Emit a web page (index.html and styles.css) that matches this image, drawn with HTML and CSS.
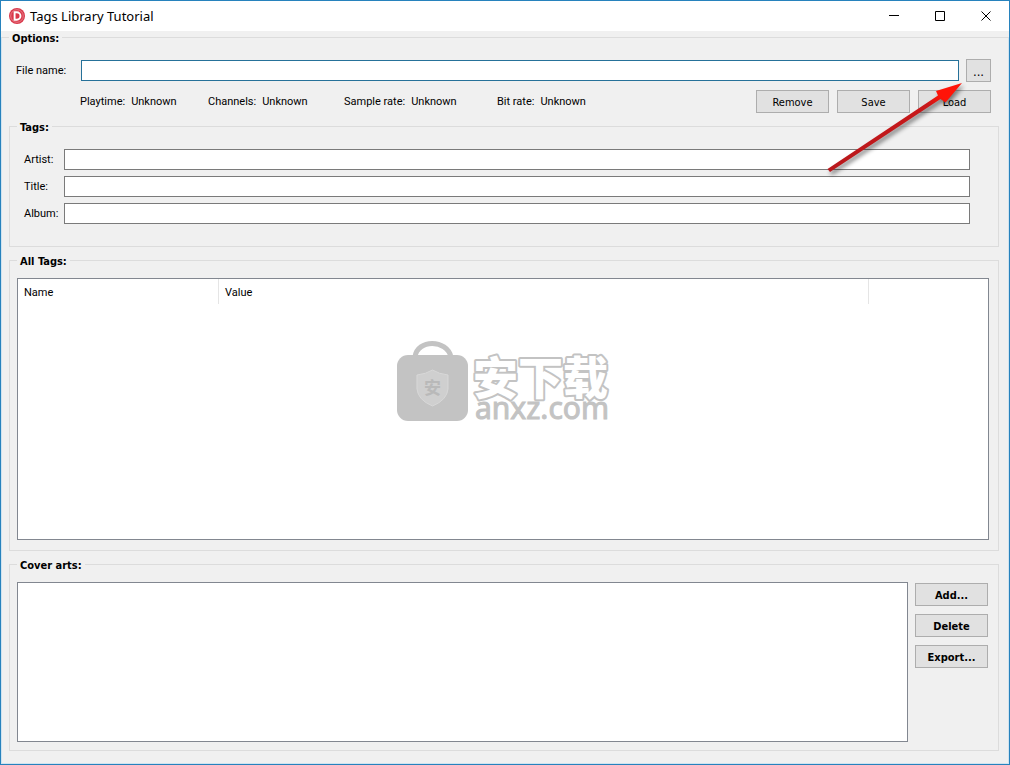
FILE: index.html
```html
<!DOCTYPE html>
<html lang="en">
<head>
<meta charset="utf-8">
<title>Tags Library Tutorial</title>
<link rel="stylesheet" href="styles.css">
</head>
<body>
<div class="window">
  <header class="titlebar">
    <svg class="app-icon" viewBox="0 0 16 16" aria-hidden="true">
      <circle cx="8" cy="8" r="8" fill="#d9384a"/>
      <circle cx="8" cy="8" r="6.300" fill="none" stroke="#ea8c96" stroke-width=".8"/>
      <path d="M5.600 4.300h2.200a3.700 3.700 0 0 1 0 7.400H5.600z" fill="none" stroke="#fff" stroke-width="1.900"/>
    </svg>
    <h1 class="title">Tags Library Tutorial</h1>
    <div class="window-controls">
      <button class="control" type="button" aria-label="Minimize"><svg viewBox="0 0 11 11"><path d="M0 4.500h10"/></svg></button>
      <button class="control" type="button" aria-label="Maximize"><svg viewBox="0 0 11 11"><path d="M.5 .5h9v9h-9z"/></svg></button>
      <button class="control" type="button" aria-label="Close"><svg viewBox="0 0 11 11"><path d="M.5 .5l9 9M9.500 .5l-9 9"/></svg></button>
    </div>
  </header>

  <fieldset class="group options">
    <legend>Options:</legend>
    <div class="file-row">
      <label for="file">File name:</label>
      <input class="field focused" id="file" type="text">
      <button class="button browse" type="button">...</button>
    </div>
    <div class="info-row">
      <dl class="info">
        <div><dt>Playtime:</dt><dd>Unknown</dd></div>
        <div><dt>Channels:</dt><dd>Unknown</dd></div>
        <div><dt>Sample rate:</dt><dd>Unknown</dd></div>
        <div><dt>Bit rate:</dt><dd>Unknown</dd></div>
      </dl>
      <div class="actions">
        <button class="button" type="button">Remove</button>
        <button class="button" type="button">Save</button>
        <button class="button" type="button">Load</button>
      </div>
    </div>

    <fieldset class="group tags">
      <legend>Tags:</legend>
      <label for="artist">Artist:</label><input class="field" id="artist" type="text">
      <label for="song">Title:</label><input class="field" id="song" type="text">
      <label for="album">Album:</label><input class="field" id="album" type="text">
    </fieldset>

    <fieldset class="group all-tags">
      <legend>All Tags:</legend>
      <div class="list tag-list">
        <table class="table">
          <thead><tr><th class="col-name" scope="col">Name</th><th class="col-value" scope="col">Value</th><td></td></tr></thead>
        </table>
        <svg class="watermark" viewBox="0 0 216 92" role="img" aria-label="anxz.com">
          <path d="M18 16C20 -2 50 -2 54 16" fill="none" stroke="#c3c3c3" stroke-width="5"/>
          <rect x="0" y="14" width="71" height="66" rx="11" fill="#c3c3c3"/>
          <path d="M20 34Q29 33 35.500 29Q42 33 51 34V48Q50 59 35.500 65Q21 59 20 48Z" fill="#cfcfcf" stroke="#d8d8d8"/>
          <text class="shield-text" x="27" y="53">安</text>
          <text class="brand" x="76" y="54">安下载</text>
          <text class="domain" x="78" y="78">anxz.com</text>
        </svg>
      </div>
    </fieldset>

    <fieldset class="group covers">
      <legend>Cover arts:</legend>
      <div class="cover-row">
        <div class="list"></div>
        <div class="cover-actions">
          <button class="button strong" type="button">Add...</button>
          <button class="button strong" type="button">Delete</button>
          <button class="button strong" type="button">Export...</button>
        </div>
      </div>
    </fieldset>
  </fieldset>

  <svg class="arrow" viewBox="0 0 144 98" aria-hidden="true">
    <defs>
      <linearGradient id="red" x1="0" y1="1" x2="1" y2="0">
        <stop offset="0" stop-color="#b8181c"/><stop offset=".75" stop-color="#c8181a"/><stop offset=".85" stop-color="#ff1408"/>
      </linearGradient>
    </defs>
    <path d="M.5 88L111 14.500L109 10L135 2L118.500 21.500L113.500 18L3 91Z" fill="url(#red)"/>
  </svg>
</div>
</body>
</html>
```
FILE: styles.css
```css
* { box-sizing: border-box; }
body {
  margin: 0;
  background: #f0f0f0;
  color: #000;
  font: 11px/14px Roboto, "Noto Sans", sans-serif;
}
.window {
  position: relative;
  display: flex;
  flex-direction: column;
  min-height: 100vh;
  border: 1px solid #2782bd;
}
.titlebar {
  display: flex;
  align-items: center;
  height: 30px;
  padding-left: 8px;
  background: #fff;
}
.app-icon { width: 16px; height: 16px; margin-right: 5px; }
.title { margin: 0; font: 400 13px/16px "Noto Sans", sans-serif; }
.window-controls { display: flex; margin-left: auto; }
.control {
  display: grid;
  place-items: center;
  width: 46px;
  height: 28px;
  padding: 0;
  border: 0;
  background: none;
}
.control svg { width: 11px; height: 11px; fill: none; stroke: #000; }
.group {
  min-width: 0;
  margin: 0;
  border: 1px solid #dcdcdc;
}
.group legend {
  padding: 2px 3px 0;
  font-family: "DejaVu Sans Condensed", "DejaVu Sans", sans-serif;
  font-stretch: condensed;
  font-weight: 700;
  line-height: 11px;
}
.options {
  flex: 1;
  padding: 0 9px 11px 7px;
  border-color: #cfe3f0;
  border-top-color: #dcdcdc;
}
.field {
  width: 100%;
  min-width: 0;
  height: 21px;
  padding: 0 4px;
  border: 1px solid #7a7a7a;
  background: #fff;
  font: inherit;
}
.focused { border-color: #267199; }
.field:focus { outline: 0; border-color: #0078d7; }
.button {
  width: 73px;
  height: 23px;
  padding: 2px 0 0;
  border: 1px solid #adadad;
  background: #e1e1e1;
  color: #000;
  font: 11px/14px "DejaVu Sans Condensed", "DejaVu Sans", sans-serif;
  font-stretch: condensed;
}
.strong { font-weight: 700; }
.browse { width: 25px; font-size: 13px; }
.file-row {
  display: grid;
  grid-template-columns: 58px 1fr 25px;
  align-items: center;
  column-gap: 7px;
  margin: 15px 8px 0 7px;
}
.info-row {
  display: flex;
  justify-content: space-between;
  margin: 8px 8px 7px 71px;
}
.info {
  display: grid;
  grid-template-columns: 128px 136px 153px auto;
  align-items: center;
  margin: 0;
}
.info div { display: flex; gap: 6px; white-space: nowrap; }
.info dd { margin: 0; }
.actions { display: flex; gap: 8px; }
.tags {
  display: grid;
  grid-template-columns: 40px 1fr;
  align-items: center;
  row-gap: 6px;
  padding: 16px 28px 22px 14px;
  margin-bottom: 7px;
}
.tags legend { margin-left: -7px; }
.all-tags {
  padding: 11px 9px 10px 7px;
  margin-bottom: 7px;
}
.list {
  position: relative;
  flex: 1;
  min-height: 160px;
  border: 1px solid #828790;
  background: #fff;
}
.tag-list { min-height: 262px; }
.table {
  width: 100%;
  border-spacing: 0;
  table-layout: fixed;
}
.table th, .table td {
  height: 25px;
  padding: 2px 6px 0;
  text-align: left;
  font-weight: 400;
}
.table th { border-right: 1px solid #e5e5e5; }
.col-name { width: 201px; }
.col-value { width: 650px; }
.covers { padding: 11px 10px 8px 7px; }
.cover-row { display: flex; gap: 7px; }
.cover-actions {
  display: flex;
  flex-direction: column;
  gap: 8px;
  padding-top: 1px;
}
.watermark {
  position: absolute;
  top: 62px;
  left: 50%;
  width: 216px;
  height: 92px;
  margin-left: -106px;
}
.brand {
  fill: #fff;
  stroke: #c3c3c3;
  stroke-width: 4px;
  stroke-linejoin: round;
  paint-order: stroke;
  font: 900 45px "Noto Sans CJK SC", sans-serif;
}
.domain { fill: #c3c3c3; stroke: #c3c3c3; font: 400 30px "Noto Sans", sans-serif; }
.shield-text { fill: #b9b9b9; font: 700 17px "Noto Sans CJK SC", sans-serif; }
.arrow {
  position: absolute;
  top: 80px;
  right: 38px;
  width: 144px;
  height: 98px;
  pointer-events: none;
  filter: drop-shadow(2px 3px 2px #0007);
}
```
